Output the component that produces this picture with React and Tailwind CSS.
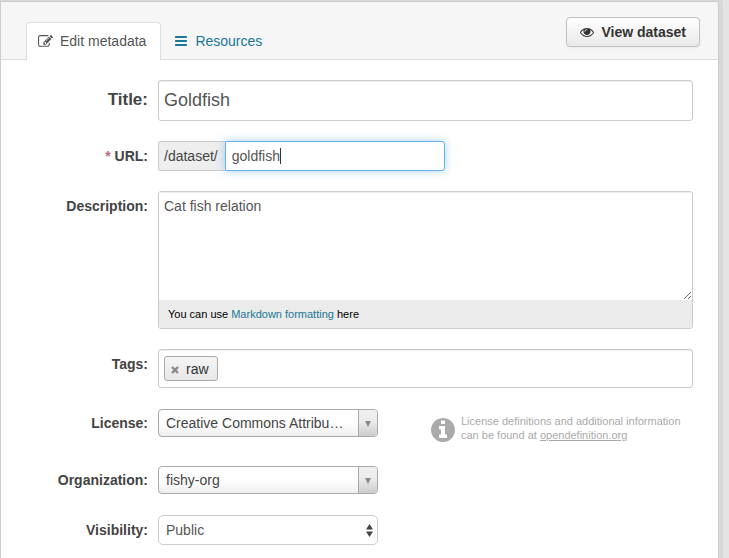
import React from "react";

function EditIcon() {
  return (
    <svg viewBox="0 0 1792 1792" className="size-[15px] shrink-0" fill="currentColor" aria-hidden="true">
      <path d="M888 1184l116-116-152-152-116 116v56h96v96h56zm440-720q-16-16-33 1l-350 350q-17 17-1 33t33-1l350-350q17-17 1-33zm80 594v190q0 119-84.5 203.5t-203.5 84.5h-832q-119 0-203.5-84.5t-84.5-203.5v-832q0-119 84.5-203.5t203.5-84.5h832q63 0 117 25 15 7 18 23 3 17-9 29l-49 49q-14 14-32 8-23-6-45-6h-832q-66 0-113 47t-47 113v832q0 66 47 113t113 47h832q66 0 113-47t47-113v-126q0-13 9-22l64-64q15-15 35-7t20 29zm-96-738l288 288-672 672h-288v-288zm444 132l-92 92-288-288 92-92q28-28 68-28t68 28l152 152q28 28 28 68t-28 68z" />
    </svg>
  );
}

function ListIcon() {
  return (
    <svg viewBox="0 0 12 10" className="h-[10px] w-3 shrink-0" fill="currentColor" aria-hidden="true">
      <rect x="0" y="0" width="12" height="2" rx="0.4" />
      <rect x="0" y="4" width="12" height="2" rx="0.4" />
      <rect x="0" y="8" width="12" height="2" rx="0.4" />
    </svg>
  );
}

function EyeIcon() {
  return (
    <svg viewBox="0 0 1792 1792" className="size-[14px] shrink-0" fill="currentColor" aria-hidden="true">
      <path d="M1664 960q-152-236-381-353 61 104 61 225 0 185-131.5 316.5t-316.5 131.5-316.5-131.5-131.5-316.5q0-121 61-225-229 117-381 353 133 205 333.5 326.5t434.5 121.5 434.5-121.5 333.5-326.5zm-720-384q0-20-14-34t-34-14q-125 0-214.5 89.5t-89.5 214.5q0 20 14 34t34 14 34-14 14-34q0-86 61-147t147-61q20 0 34-14t14-34zm848 384q0 34-20 69-140 230-376.5 368.5t-499.5 138.5-499.5-139-376.5-368q-20-35-20-69t20-69q140-229 376.5-368t499.5-139 499.5 139 376.5 368q20 35 20 69z" />
    </svg>
  );
}

function InfoIcon() {
  return (
    <svg viewBox="128 128 1536 1536" className="size-6 shrink-0" fill="currentColor" aria-hidden="true">
      <path d="M1152 1376v-160q0-14-9-23t-23-9h-96v-512q0-14-9-23t-23-9h-320q-14 0-23 9t-9 23v160q0 14 9 23t23 9h96v320h-96q-14 0-23 9t-9 23v160q0 14 9 23t23 9h448q14 0 23-9t9-23zm-128-896v-160q0-14-9-23t-23-9h-192q-14 0-23 9t-9 23v160q0 14 9 23t23 9h192q14 0 23-9t9-23zm640 416q0 209-103 385.5t-279.5 279.5-385.5 103-385.5-103-279.5-279.5-103-385.5 103-385.5 279.5-279.5 385.5-103 385.5 103 279.5 279.5 103 385.5z" />
    </svg>
  );
}

function Row({ id, label, labelClass = "pt-[5px] text-sm", rowClass = "", required, children }) {
  return (
    <div className={`flex items-start gap-[10px] ${rowClass}`}>
      <label htmlFor={id} className={`w-[147px] shrink-0 text-right leading-5 font-bold ${labelClass}`}>
        {required && <span className="text-[#c0687c]">* </span>}
        {label}
      </label>
      <div className="flex min-w-0 flex-1 items-start">{children}</div>
    </div>
  );
}

function ComboSelect({ id, options }) {
  return (
    <div className="relative h-7 w-[220px] shrink-0">
      <select
        id={id}
        className="h-full w-full appearance-none truncate rounded-[4px] border border-[#aaa] bg-linear-to-t from-[#eee] to-white to-50% pr-8 pl-[7px] text-sm text-[#444] outline-none"
      >
        {options.map((o) => (
          <option key={o}>{o}</option>
        ))}
      </select>
      <span className="pointer-events-none absolute inset-y-px right-px flex w-[19px] items-center justify-center rounded-r-[3px] border-l border-[#aaa] bg-linear-to-t from-[#ccc] to-[#eee] to-60%">
        <svg viewBox="0 0 6 6" className="mt-[2px] size-[6px]" fill="#888" aria-hidden="true">
          <path d="M0 0h6L3 6z" />
        </svg>
      </span>
    </div>
  );
}

const field = "border border-[#ccc] bg-white text-[#555] shadow-[inset_0_1px_1px_rgba(0,0,0,0.075)] outline-none";

export default function App() {
  return (
    <div className="min-h-screen bg-[#e4e4e4] pt-px pr-[10px] font-['Helvetica_Neue','Liberation_Sans',Arial,sans-serif] text-sm leading-5 text-[#444]">
      <main className="min-h-[calc(100vh-1px)] rounded-tr-[3px] border border-b-0 border-[#ccc] bg-white shadow-[0_0_0_4px_rgba(0,0,0,0.05)]">
        <header className="flex h-[58px] items-end justify-between rounded-tr-[2px] border-b border-[#ddd] bg-[#f6f6f6] pr-[18px] pl-[25px]">
          <nav className="-mb-px flex">
            <a href="#edit" className="flex h-[38px] items-center gap-[7px] rounded-t-[4px] border border-b-0 border-[#ddd] bg-white pr-[14px] pb-px pl-[11px] text-[#555]">
              <EditIcon />
              Edit metadata
            </a>
            <a href="#resources" className="flex h-[38px] items-center gap-2 px-[14px] text-[#187794]">
              <ListIcon />
              Resources
            </a>
          </nav>
          <button className="mb-3 flex h-[30px] items-center gap-[7px] rounded-[4px] border border-[#c2c2c2] bg-linear-to-b from-white to-[#e9e9e9] px-[13px] font-bold text-[#333] shadow-[0_1px_2px_rgba(0,0,0,0.05)]">
            <EyeIcon />
            View dataset
          </button>
        </header>

        <form className="flex flex-col gap-5 pt-5 pr-[25px]">
          <Row id="title" label="Title:" labelClass="pt-[10px] text-[17px]">
            <input id="title" defaultValue="Goldfish" className={`h-[41px] w-full rounded-[3px] px-[5px] text-lg ${field}`} />
          </Row>

          <Row id="url" label="URL:" required>
            <span className="flex h-[30px] items-center rounded-l-[3px] border border-r-0 border-[#ccc] bg-[#eee] pr-[7px] pl-[5px]">/dataset/</span>
            <div className="flex h-[30px] w-[220px] items-center rounded-r-[3px] border border-[#66afe9] bg-white pl-[6px] shadow-[0_0_8px_rgba(82,168,236,0.5)]">
              <input id="url" defaultValue="goldfish" className="field-sizing-content bg-transparent text-sm text-[#555] outline-none" />
              <span className="h-4 w-px bg-[#333]" />
            </div>
          </Row>

          <Row id="description" label="Description:">
            <div className="flex w-full flex-col overflow-hidden rounded-[3px] border border-[#ccc]">
              <textarea
                id="description"
                defaultValue="Cat fish relation"
                className="block h-[108px] w-full resize-y bg-white px-[5px] py-1 text-sm leading-5 text-[#555] shadow-[inset_0_1px_1px_rgba(0,0,0,0.075)] outline-none"
              />
              <p className="h-7 bg-[#ebebeb] px-[9px] text-[11px] leading-7 text-black">
                You can use <a href="#markdown" className="text-[#187794]">Markdown formatting</a> here
              </p>
            </div>
          </Row>

          <Row id="tags" label="Tags:" rowClass="min-h-10">
            <div className={`flex h-[39px] w-full items-center rounded-[3px] px-[5px] ${field}`}>
              <span className="flex h-[25px] shrink-0 items-center gap-[7px] rounded-[3px] border border-[#aaa] bg-linear-to-b from-[#f4f4f4] to-[#e8e8e8] pr-2 pl-[6px] text-[#333]">
                <button type="button" aria-label="Remove raw" className="pt-[3px] text-[#888]">
                  <svg viewBox="0 0 8 8" className="size-2" stroke="currentColor" strokeWidth="2.4" aria-hidden="true">
                    <path d="M1 1l6 6M7 1L1 7" />
                  </svg>
                </button>
                raw
              </span>
              <input id="tags" className="ml-1 min-w-0 flex-1 bg-transparent outline-none" />
            </div>
          </Row>

          <Row id="license" label="License:" labelClass="pt-1 text-sm" rowClass="min-h-[37px]">
            <ComboSelect id="license" options={["Creative Commons Attribution", "Creative Commons CCZero"]} />
            <div className="ml-[53px] flex flex-1 items-start gap-[6px] pt-[5px] text-[#aaa]">
              <span className="pt-1">
                <InfoIcon />
              </span>
              <p className="text-[11px] leading-[14px]">
                License definitions and additional information
                <br />
                can be found at <a href="#opendefinition" className="underline">opendefinition.org</a>
              </p>
            </div>
          </Row>

          <Row id="organization" label="Organization:" labelClass="pt-1 text-sm" rowClass="min-h-[29px]">
            <ComboSelect id="organization" options={["fishy-org"]} />
          </Row>

          <Row id="visibility" label="Visibility:">
            <div className="relative h-[30px] w-[220px]">
              <select id="visibility" className="h-full w-full appearance-none rounded-[5px] border border-[#ccc] bg-white pr-6 pl-[7px] text-sm text-[#555] outline-none">
                <option>Public</option>
                <option>Private</option>
              </select>
              <svg viewBox="0 0 7 13" className="pointer-events-none absolute top-[9px] right-[5px] h-[13px] w-[7px]" fill="#444" aria-hidden="true">
                <path d="M0 5.500h7L3.500 0zM0 7.500h7L3.500 13z" />
              </svg>
            </div>
          </Row>
        </form>
      </main>
    </div>
  );
}
